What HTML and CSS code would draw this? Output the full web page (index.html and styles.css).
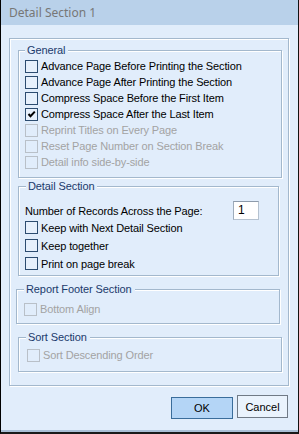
FILE: index.html
```html
<!DOCTYPE html>
<html>
<head>
<meta charset="utf-8">
<link rel="stylesheet" href="styles.css">
</head>
<body>
<div class="window">
  <div class="titlebar">Detail Section 1</div>
  <div class="client">
    <div class="frame">
      <div class="group g-general">
        <div class="legend">General</div>
        <div class="rows">
          <div class="row"><span class="cb"></span><span class="lbl">Advance Page Before Printing the Section</span></div>
          <div class="row"><span class="cb"></span><span class="lbl">Advance Page After Printing the Section</span></div>
          <div class="row"><span class="cb"></span><span class="lbl">Compress Space Before the First Item</span></div>
          <div class="row"><span class="cb"><svg viewBox="0 0 11 11" width="11" height="11"><path d="M2.5 5 L4.5 7.2 L8.8 2.6" fill="none" stroke="#000" stroke-width="2"/></svg></span><span class="lbl">Compress Space After the Last Item</span></div>
          <div class="row disabled"><span class="cb"></span><span class="lbl">Reprint Titles on Every Page</span></div>
          <div class="row disabled"><span class="cb"></span><span class="lbl">Reset Page Number on Section Break</span></div>
          <div class="row disabled"><span class="cb"></span><span class="lbl">Detail info side-by-side</span></div>
        </div>
      </div>
      <div class="group g-detail">
        <div class="legend">Detail Section</div>
        <div class="input-row">
          <span class="lbl">Number of Records Across the Page:</span>
          <span class="textbox">1</span>
        </div>
        <div class="rows">
          <div class="row tall"><span class="cb"></span><span class="lbl">Keep with Next Detail Section</span></div>
          <div class="row tall"><span class="cb"></span><span class="lbl">Keep together</span></div>
          <div class="row tall"><span class="cb"></span><span class="lbl">Print on page break</span></div>
        </div>
      </div>
      <div class="group g-footer">
        <div class="legend">Report Footer Section</div>
        <div class="rows">
          <div class="row disabled"><span class="cb"></span><span class="lbl">Bottom Align</span></div>
        </div>
      </div>
      <div class="group g-sort">
        <div class="legend">Sort Section</div>
        <div class="rows">
          <div class="row disabled"><span class="cb"></span><span class="lbl">Sort Descending Order</span></div>
        </div>
      </div>
    </div>
    <div class="buttons">
      <button class="btn btn-ok">OK</button>
      <button class="btn btn-cancel">Cancel</button>
    </div>
  </div>
</div>
</body>
</html>
```

FILE: styles.css
```css
* { box-sizing: border-box; }
html, body { margin: 0; padding: 0; }
body {
  width: 299px;
  height: 434px;
  overflow: hidden;
  background: #e1edfb;
  font-family: "Liberation Sans", Arial, sans-serif;
  font-size: 11px;
  color: #000;
}
.window {
  width: 299px;
  height: 434px;
  border-left: 1px solid #000;
  border-right: 1px solid #111;
  border-bottom: 2px solid #1a1a1a;
  background: #e1edfb;
  box-shadow: inset 0 -2px 0 #a9bfd6;
  display: flex;
  flex-direction: column;
}
.titlebar {
  height: 25px;
  background: #b9d1ea;
  color: #777;
  font-family: "Noto Sans", "Liberation Sans", sans-serif;
  font-size: 12px;
  line-height: 26px;
  padding-left: 8px;
}
.client {
  padding: 13px 0 0 8px;
  display: flex;
  flex-direction: column;
}
.frame {
  width: 280px;
  height: 348px;
  border: 1px solid #a3b8cd;
  box-shadow: inset 1px 1px 0 #fff, 1px 1px 0 #fff;
  padding: 11px 0 0 0;
  display: flex;
  flex-direction: column;
}
.group {
  border: 1px solid #a3b8cd;
  box-shadow: inset 1px 1px 0 #fff, 1px 1px 0 #fff;
}
.legend {
  margin-top: -7px;
  height: 13px;
  line-height: 13px;
  width: fit-content;
  padding: 0 3px 0 2px;
  background: #e1edfb;
  color: #1b3a6b;
  letter-spacing: -0.1px;
}
.lbl { letter-spacing: -0.12px; white-space: nowrap; }
.rows { display: flex; flex-direction: column; }
.row {
  display: flex;
  align-items: flex-start;
  gap: 3px;
  height: 16px;
  line-height: 16px;
}
.row.tall { height: 18px; line-height: 16px; }
.cb {
  flex: none;
  width: 13px;
  height: 13px;
  margin-top: 2px;
  border: 1px solid #2c4c70;
  background: #e6f0fc;
  display: flex;
  align-items: center;
  justify-content: center;
}
.cb svg { display: block; }
.row.tall .cb { margin-top: 1px; }
.row.disabled { color: #a3a3a3; }
.row.disabled .cb { border-color: #b9c0c8; background: #e1edfb; }

.g-general {
  margin: 0 0 0 8px;
  width: 264px;
  padding: 0 6px 7px 6px;
}
.g-general .rows { margin-top: 1px; }

.g-detail {
  margin: 8px 0 0 8px;
  width: 261px;
  padding: 0 6px 1px 6px;
}
.g-detail .legend { margin-left: 1px; }
.input-row {
  margin-top: 8px;
  height: 19px;
  display: flex;
  align-items: center;
  justify-content: space-between;
  padding-right: 13px;
}
.textbox {
  width: 26px;
  height: 19px;
  background: #fff;
  border: 1px solid #b5c2d0;
  border-top-color: #8d9bab;
  border-left-color: #9eacbb;
  line-height: 17px;
  padding-left: 4px;
  font-size: 12px;
}
.g-detail .rows { margin-top: 0; }

.g-footer {
  margin: 13px 0 0 6px;
  width: 264px;
  padding: 0 7px 6px 7px;
}
.g-footer .rows { margin-top: 5px; }

.g-sort {
  margin: 13px 0 0 8px;
  width: 264px;
  padding: 0 8px 8px 8px;
}
.g-sort .legend { margin-left: -1px; }
.g-sort .rows { margin-top: 3px; }

.buttons {
  margin-top: 9px;
  width: 280px;
  display: flex;
  justify-content: flex-end;
  align-items: flex-start;
  gap: 4px;
  padding-right: 1px;
}
.btn {
  font-family: "Liberation Sans", Arial, sans-serif;
  font-size: 11px;
  color: #000;
  padding: 0;
  margin: 0;
  line-height: 18px;
}
.btn-ok {
  margin-top: 2px;
  width: 62px;
  height: 22px;
  background: #b4d5f6;
  border: 1px solid #3a6d9b;
}
.btn-cancel {
  width: 51px;
  height: 23px;
  background: #eaf3fd;
  border: 1px solid #707a86;
}
```
